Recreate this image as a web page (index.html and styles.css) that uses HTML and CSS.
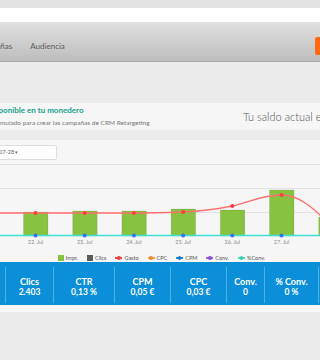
FILE: index.html
```html
<!DOCTYPE html>
<html lang="es">
<head>
<meta charset="utf-8">
<title>Monedero</title>
<link rel="stylesheet" href="styles.css">
</head>
<body>
<div class="topstrip"></div>
<div class="whiteband"></div>
<nav class="nav">
  <ul class="menu">
    <li>Campañas</li>
    <li>Audiencia</li>
  </ul>
  <span class="cta">Crear campaña</span>
</nav>
<main class="content">
  <section class="wallet">
    <div class="wallet-info">
      <div class="wallet-title">Saldo disponible en tu monedero</div>
      <div class="wallet-sub">Tu saldo acumulado para crear las campañas de CRM Retargeting</div>
    </div>
    <div class="balance">Tu saldo actual es: 125,40 €</div>
  </section>
  <section class="chart-card">
    <div class="chart-head">
      <div class="range">2017-07-21 - 2017-07-28 <span class="caret">▾</span></div>
    </div>
    <svg class="plot" width="320" height="89" viewBox="0 0 320 89">
      <line x1="0" y1="23.5" x2="320" y2="23.5" class="grid"/>
      <line x1="0" y1="47.5" x2="320" y2="47.5" class="grid"/>
      <g class="bars">
        <rect x="23.5" y="47" width="24.5" height="24"/>
        <rect x="72.7" y="46" width="24.5" height="25"/>
        <rect x="121.9" y="46" width="24.5" height="25"/>
        <rect x="171.1" y="44" width="24.5" height="27"/>
        <rect x="220.3" y="45" width="24.5" height="26"/>
        <rect x="269.5" y="25" width="24.5" height="46"/>
        <rect x="318.7" y="52" width="24.5" height="19"/>
      </g>
      <path class="gasto" d="M -13.7 48 L 133.9 48 C 150 48 165 47.6 183.1 47 C 200 46.4 215 44.5 232.3 41 C 250 37 262 30 281.5 30 C 298 30 312 41 330.7 61"/>
      <g class="gasto-dots">
        <circle cx="35.5" cy="48" r="2"/>
        <circle cx="84.7" cy="48" r="2"/>
        <circle cx="133.9" cy="48" r="2"/>
        <circle cx="183.1" cy="47" r="2"/>
        <circle cx="232.3" cy="41" r="2"/>
        <circle cx="281.5" cy="30" r="2"/>
      </g>
      <line x1="0" y1="70.5" x2="320" y2="70.5" class="conv-line"/>
      <g class="base-dots">
        <circle cx="35.5" cy="70.5" r="2"/>
        <circle cx="84.7" cy="70.5" r="2"/>
        <circle cx="133.9" cy="70.5" r="2"/>
        <circle cx="183.1" cy="70.5" r="2"/>
        <circle cx="232.3" cy="70.5" r="2"/>
        <circle cx="281.5" cy="70.5" r="2"/>
      </g>
      <g class="axis">
        <text x="35.5" y="79">22. Jul</text>
        <text x="84.7" y="79">23. Jul</text>
        <text x="133.9" y="79">24. Jul</text>
        <text x="183.1" y="79">25. Jul</text>
        <text x="232.3" y="79">26. Jul</text>
        <text x="281.5" y="79">27. Jul</text>
      </g>
    </svg>
    <ul class="legend">
      <li><span class="sq sq-green"></span>Impr.</li>
      <li><span class="sq sq-gray"></span>Clics</li>
      <li><span class="ln ln-red"></span>Gasto</li>
      <li><span class="ln ln-orange"></span>CPC</li>
      <li><span class="ln ln-blue"></span>CPM</li>
      <li><span class="ln ln-purple"></span>Conv.</li>
      <li><span class="ln ln-teal"></span>%Conv.</li>
    </ul>
    <div class="stats">
      <div class="stat first"><span class="lbl">Impr.</span><span class="val">1.845.210</span></div>
      <div class="stat"><span class="lbl">Clics</span><span class="val">2.403</span></div>
      <div class="stat"><span class="lbl">CTR</span><span class="val">0,13 %</span></div>
      <div class="stat"><span class="lbl">CPM</span><span class="val">0,05 €</span></div>
      <div class="stat"><span class="lbl">CPC</span><span class="val">0,03 €</span></div>
      <div class="stat"><span class="lbl">Conv.</span><span class="val">0</span></div>
      <div class="stat"><span class="lbl">% Conv.</span><span class="val">0 %</span></div>
      <div class="stat"><span class="lbl">Gasto</span><span class="val">92,25 €</span></div>
    </div>
  </section>
</main>
</body>
</html>
```
FILE: styles.css
```css
html, body {
  margin: 0;
  padding: 0;
}
body {
  width: 320px;
  height: 360px;
  overflow: hidden;
  background: #ebebeb;
  font-family: Lato, "Open Sans", "Liberation Sans", sans-serif;
  color: #555;
}
.topstrip {
  height: 8px;
  background: #e3e3e3;
}
.whiteband {
  height: 14px;
  background: #ffffff;
}
.nav {
  height: 40px;
  box-sizing: border-box;
  padding-top: 8px;
  display: flex;
  align-items: center;
  background: linear-gradient(#e1e1e1, #bdbdbd);
  border-bottom: 1px solid #a8a8a8;
  white-space: nowrap;
}
.menu {
  display: flex;
  gap: 18px;
  margin: 0 0 0 -24px;
  padding: 0;
  list-style: none;
  font-size: 8px;
  color: #5a5a5a;
  flex: none;
}
.cta {
  flex: none;
  margin-left: auto;
  margin-right: -55px;
  width: 60px;
  height: 18px;
  background: #ff6a10;
  border-radius: 2px;
  color: #fff;
  font-size: 7px;
  line-height: 18px;
  text-indent: 8px;
  overflow: hidden;
}
.content {
  padding-top: 41px;
}
.wallet {
  height: 27px;
  background: #f6f6f6;
  display: flex;
  align-items: flex-start;
  white-space: nowrap;
}
.wallet-info {
  flex: none;
  width: 276px;
  margin-left: -33px;
  padding-top: 2px;
  display: flex;
  flex-direction: column;
  gap: 4px;
}
.wallet-title {
  font-size: 8px;
  line-height: 10px;
  font-weight: 700;
  color: #16a08a;
}
.wallet-sub {
  font-size: 6.5px;
  line-height: 8px;
  color: #777;
  margin-left: -2px;
}
.balance {
  flex: none;
  align-self: center;
  font-size: 11px;
  font-weight: 300;
  color: #555;
}
.chart-card {
  margin-top: 10px;
  background: #f6f6f6;
  padding-bottom: 7px;
}
.chart-head {
  height: 25px;
  box-sizing: border-box;
  padding-top: 5px;
  border-bottom: 1px solid #e1e1e1;
}
.range {
  width: 112px;
  height: 15px;
  box-sizing: border-box;
  margin-left: -55px;
  padding-left: 4px;
  background: #fff;
  border: 1px solid #dedede;
  border-radius: 2px;
  font-size: 5.5px;
  line-height: 13px;
  color: #666;
  white-space: nowrap;
}
.caret {
  font-size: 5px;
}
.plot {
  display: block;
}
.grid {
  stroke: #e2e2e2;
  stroke-width: 1;
}
.bars rect {
  fill: #87c341;
  stroke: rgba(0, 0, 0, 0.08);
  stroke-width: 1;
}
.gasto {
  fill: none;
  stroke: #ff6f6f;
  stroke-width: 1.3;
}
.gasto-dots circle {
  fill: #ff3d3d;
}
.conv-line {
  stroke: #3fe1d2;
  stroke-width: 1.5;
}
.base-dots circle {
  fill: #3f6ef0;
}
.axis text {
  font-size: 5.5px;
  fill: #8d8d8d;
  text-anchor: middle;
  font-family: Lato, "Open Sans", sans-serif;
}
.legend {
  display: flex;
  justify-content: center;
  align-items: center;
  gap: 9px;
  height: 8px;
  margin: 0;
  padding: 0 0 0 3px;
  list-style: none;
  font-size: 5.5px;
  color: #555;
  white-space: nowrap;
}
.legend li {
  display: flex;
  align-items: center;
  gap: 2px;
}
.sq {
  width: 6px;
  height: 6px;
  display: inline-block;
}
.sq-green { background: #87c341; }
.sq-gray { background: #5c5c5c; }
.ln {
  width: 7px;
  height: 1.5px;
  display: inline-flex;
  align-items: center;
  justify-content: center;
}
.ln::after {
  content: "";
  width: 3.5px;
  height: 3.5px;
  border-radius: 50%;
  background: inherit;
  filter: brightness(0.9);
}
.ln-red { background: #ff4a4a; }
.ln-orange { background: #ffa040; }
.ln-blue { background: #1f86dc; }
.ln-purple { background: #9a5cf0; }
.ln-teal { background: #3fe1c8; }
.stats {
  display: grid;
  grid-template-columns: 80px 48px 61px 56px 56px 38px 54px 60px;
  margin-left: -75px;
  height: 43px;
  background: #0b8fd8;
  color: #fff;
  white-space: nowrap;
}
.stat {
  display: flex;
  flex-direction: column;
  align-items: center;
  justify-content: center;
  padding-top: 3px;
  margin: 5px 0 2px;
  border-left: 1px solid rgba(255, 255, 255, 0.28);
  font-weight: 700;
}
.stat.first {
  border-left: none;
}
.lbl {
  font-size: 9px;
  line-height: 11px;
}
.val {
  font-size: 8.5px;
  line-height: 11px;
}
```
